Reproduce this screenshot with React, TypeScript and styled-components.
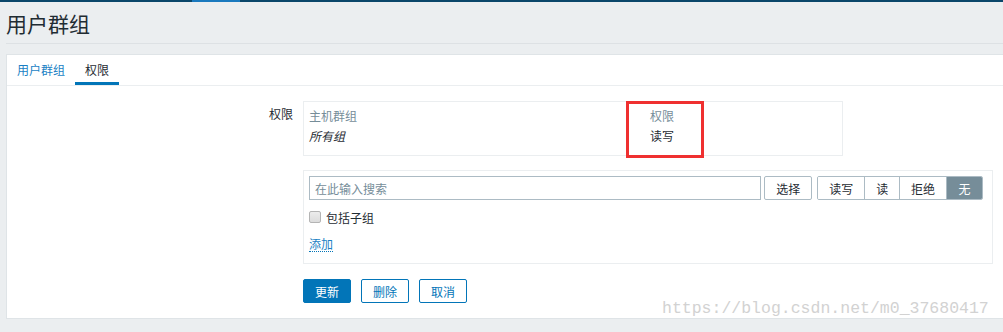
import styled, { createGlobalStyle } from "styled-components";

const GlobalStyle = createGlobalStyle`
  html, body {
    margin: 0;
    padding: 0;
    background: #ebeef0;
    overflow: hidden;
  }
  body {
    font-family: "Noto Sans CJK SC", "Noto Sans", sans-serif;
    font-size: 12px;
    color: #1f2c33;
  }
`;

const Page = styled.div`
  position: relative;
  width: 1003px;
  height: 332px;
  overflow: hidden;
`;

const TopBar = styled.div`
  height: 2px;
  display: flex;
  background: #0a466a;
`;

const TopBarActive = styled.div`
  margin-left: 192px;
  width: 48px;
  background: #1a79be;
`;

const Header = styled.div`
  margin-left: 6px;
  height: 41px;
  border-bottom: 1px solid #dde1e4;
  display: flex;
  align-items: center;
`;

const Title = styled.h1`
  margin: 0;
  font-size: 21px;
  font-weight: 400;
  color: #1f2c33;
  line-height: 1;
  margin-top: 2px;
`;

const Panel = styled.div`
  margin: 10px -10px 0 6px;
  background: #fff;
  border: 1px solid #dfe4e7;
`;

const Tabs = styled.div`
  display: flex;
  height: 30px;
  border-bottom: 1px solid #ebeef0;
`;

const Tab = styled.div<{ $active?: boolean }>`
  padding: 2px 10px 0;
  display: flex;
  align-items: center;
  color: ${(p) => (p.$active ? "#1f2c33" : "#1a7fc4")};
  border-bottom: 3px solid ${(p) => (p.$active ? "#0275b8" : "transparent")};
  box-sizing: border-box;
  height: 30px;
`;

const Form = styled.div`
  padding: 15px 0 15px;
  display: grid;
  grid-template-columns: 286px 690px;
  column-gap: 10px;
  row-gap: 14px;
`;

const Label = styled.div`
  text-align: right;
  padding-top: 4px;
`;

const TableBox = styled.div`
  position: relative;
  width: 540px;
  box-sizing: border-box;
  border: 1px solid #ebeef0;
  padding: 3px 5px 10px;
`;

const Table = styled.table`
  border-collapse: collapse;
  width: 100%;
  th, td {
    text-align: left;
    padding: 0;
    height: 20px;
  }
  th {
    font-weight: 400;
    color: #768d99;
  }
`;

const GroupCell = styled.td`
  font-style: italic;
  width: 341px;
`;

const Highlight = styled.div`
  position: absolute;
  left: 322px;
  top: -1px;
  width: 78px;
  height: 57px;
  box-sizing: border-box;
  border: 3px solid #ef3030;
`;

const Picker = styled.div`
  width: 690px;
  box-sizing: border-box;
  border: 1px solid #ebeef0;
  padding: 5px 9px 11px 5px;
`;

const SearchRow = styled.div`
  display: flex;
  align-items: center;
`;

const SearchInput = styled.input`
  width: 453px;
  height: 24px;
  box-sizing: border-box;
  border: 1px solid #acbbc4;
  padding: 0 5px;
  font: inherit;
  color: #1f2c33;
  outline: none;
  &::placeholder {
    color: #768d99;
  }
`;

const Button = styled.button`
  height: 24px;
  box-sizing: border-box;
  background: #fff;
  border: 1px solid #acbbc4;
  border-radius: 2px;
  font: inherit;
  color: #1f2c33;
  padding: 0;
`;

const SelectButton = styled(Button)`
  width: 48px;
  margin-left: 3px;
`;

const Segmented = styled.div`
  display: flex;
  margin-left: 5px;
  border-radius: 2px;
  overflow: hidden;
  border: 1px solid #acbbc4;
`;

const Segment = styled.button<{ $w: number; $active?: boolean }>`
  width: ${(p) => p.$w}px;
  height: 22px;
  border: none;
  border-left: 1px solid #acbbc4;
  background: ${(p) => (p.$active ? "#768d99" : "#fff")};
  color: ${(p) => (p.$active ? "#fff" : "#1f2c33")};
  font: inherit;
  padding: 0;
  &:first-child {
    border-left: none;
  }
`;

const CheckRow = styled.label`
  display: flex;
  align-items: center;
  gap: 5px;
  margin-top: 10px;
  height: 14px;
`;

const Check = styled.span`
  width: 12px;
  height: 12px;
  box-sizing: border-box;
  border: 1px solid #b4b4b4;
  border-radius: 2px;
  background: linear-gradient(#ececec, #dcdcdc);
`;

const AddLink = styled.a`
  display: inline-block;
  margin-top: 12px;
  color: #1a7fc4;
  text-decoration: none;
  border-bottom: 1px dotted #0275b8;
  line-height: 15px;
`;

const Actions = styled.div`
  display: flex;
  gap: 10px;
  padding-top: 1px;
`;

const ActionButton = styled.button<{ $primary?: boolean }>`
  width: 48px;
  height: 24px;
  box-sizing: border-box;
  border: 1px solid #0275b8;
  border-radius: 2px;
  background: ${(p) => (p.$primary ? "#0275b8" : "#fff")};
  color: ${(p) => (p.$primary ? "#fff" : "#0275b8")};
  font: inherit;
  padding: 0;
`;

const Watermark = styled.div`
  position: absolute;
  left: 662px;
  top: 299px;
  font-family: "Liberation Mono", monospace;
  font-size: 16.5px;
  color: #d2d2d2;
  white-space: nowrap;
`;

export default function App() {
  return (
    <Page>
      <GlobalStyle />
      <TopBar>
        <TopBarActive />
      </TopBar>
      <Header>
        <Title>用户群组</Title>
      </Header>
      <Panel>
        <Tabs>
          <Tab>用户群组</Tab>
          <Tab $active>权限</Tab>
        </Tabs>
        <Form>
          <Label>权限</Label>
          <TableBox>
            <Table>
              <thead>
                <tr>
                  <th>主机群组</th>
                  <th>权限</th>
                </tr>
              </thead>
              <tbody>
                <tr>
                  <GroupCell>所有组</GroupCell>
                  <td>读写</td>
                </tr>
              </tbody>
            </Table>
            <Highlight />
          </TableBox>
          <div />
          <Picker>
            <SearchRow>
              <SearchInput placeholder="在此输入搜索" />
              <SelectButton>选择</SelectButton>
              <Segmented>
                <Segment $w={46}>读写</Segment>
                <Segment $w={35}>读</Segment>
                <Segment $w={47}>拒绝</Segment>
                <Segment $w={36} $active>无</Segment>
              </Segmented>
            </SearchRow>
            <CheckRow>
              <Check />
              包括子组
            </CheckRow>
            <AddLink>添加</AddLink>
          </Picker>
          <div />
          <Actions>
            <ActionButton $primary>更新</ActionButton>
            <ActionButton>删除</ActionButton>
            <ActionButton>取消</ActionButton>
          </Actions>
        </Form>
      </Panel>
      <Watermark>https://blog.csdn.net/m0_37680417</Watermark>
    </Page>
  );
}
